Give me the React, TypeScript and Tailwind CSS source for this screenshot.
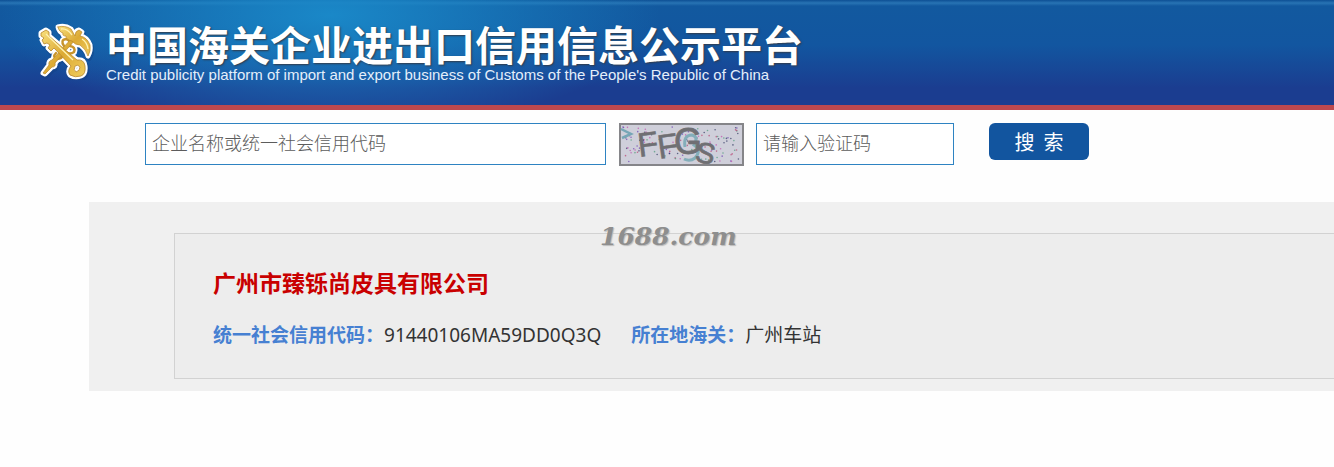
const colors = ["#6b3fb0", "#b8406f", "#4a9a78", "#2d3460", "#c04fae"];

const dots = Array.from({ length: 130 }, (_, i) => ({
	x: 4 + Math.abs(Math.sin(i * 12.9898) * 43758.5453) % 117,
	y: 4 + Math.abs(Math.sin(i * 78.233) * 12543.123) % 35,
	color: colors[i % colors.length],
}));

export default function App() {
	return (
		<div className="min-h-screen overflow-hidden bg-[#fefefe] font-['Noto_Sans','Noto_Sans_CJK_SC',sans-serif]">
			<Header />
			<main>
				<SearchForm />
				<Result />
			</main>
		</div>
	);
}

function Header() {
	return (
		<header className="flex h-[110px] items-start border-b-[5px] border-[#bd484e] bg-[radial-gradient(ellipse_330px_115px_at_330px_15px,#1a88c8_0%,#1a88c800_100%),linear-gradient(to_bottom,#0d4f94_0px,#2874b4_3px,#12599f_6px,#1256a0_45px,#1b3d90_88px,#1b3d90_100%)] pl-9 pt-5">
			<Emblem />
			<div className="ml-3 text-white">
				<h1 className="font-['Noto_Sans_CJK_SC',sans-serif] text-[41px] font-bold leading-[47px] whitespace-nowrap [text-shadow:1px_1px_2px_#333b48]">
					中国海关企业进出口信用信息公示平台
				</h1>
				<p className="font-['Liberation_Sans',sans-serif] text-[15px] leading-4 whitespace-nowrap text-[#e4effb]">
					Credit publicity platform of import and export business of Customs of the People's Republic of China
				</p>
			</div>
		</header>
	);
}

function Emblem() {
	return (
		<svg className="mt-0.5 h-[58px] w-[58px] shrink-0" viewBox="6 6 58 58" aria-hidden="true">
			<defs>
				<linearGradient id="gold" x1="0" y1="0" x2="1" y2="1">
					<stop offset="0" stopColor="#f8df7c" />
					<stop offset="0.5" stopColor="#dcaa34" />
					<stop offset="1" stopColor="#f0cc5c" />
				</linearGradient>
				<g id="staff" strokeLinejoin="round" strokeLinecap="round">
					<path d="M45 24 L25 47 Q26 51 22 51 L15 58 L13 57 L19 49 Q18 45 22 44 L42 22 Z" />
					<path d="M28 11 Q35 9 41 13 L45 20 Q45 15 49 14 L52 16 L50 20 Q57 21 60 29 Q61 35 58 40 Q56 33 50 29 Q45 29 42 25 Q36 24 36 20 Q32 20 33 17 Q29 16 28 11 Z" />
				</g>
				<g id="snakes" fill="none" strokeLinecap="round">
					<path d="M34 30 Q30 24 36 23 Q41 24 40 30 Q46 31 44 36 Q40 39 36 36 M26 37 Q22 41 27 43 Q32 43 33 39" />
				</g>
				<path
					id="key"
					d="M16 14 L19 16 L19 20 L47 44 Q54 43 55 50 Q56 58 51 60 Q45 62 40 59 Q37 55 41 50 L24 32 L21 35 L18 32 L20 29 L17 27 L14 28 L12 24 L14 22 L11 20 L11 17 Z M45 50 Q43 54 46 56 Q50 55 50 51 Q48 48 45 50 Z"
					fillRule="evenodd"
					strokeLinejoin="round"
				/>
			</defs>
			<g transform="translate(1 2)" stroke="#123f80" strokeWidth="6" opacity="0.4">
				<use href="#staff" />
				<use href="#key" />
			</g>
			<g fill="#fff" stroke="#fff" strokeWidth="5">
				<use href="#staff" />
				<use href="#snakes" strokeWidth="6" />
				<use href="#key" />
			</g>
			<use href="#snakes" stroke="#c8942a" strokeWidth="2.4" />
			<use href="#staff" fill="url(#gold)" stroke="#b9862a" strokeWidth="0.7" />
			<use href="#key" fill="url(#gold)" stroke="#b9862a" strokeWidth="0.8" />
			<path d="M16 18 L43 44 M31 13 Q37 12 42 19 M52 23 Q57 26 58 33" fill="none" stroke="#fff2b0" strokeWidth="1.3" />
		</svg>
	);
}

function SearchForm() {
	return (
		<form className="ml-[145px] flex items-start pt-[13px]" onSubmit={(e) => e.preventDefault()}>
			<input
				type="text"
				aria-label="企业名称或统一社会信用代码"
				placeholder="企业名称或统一社会信用代码"
				className="h-[42px] w-[461px] border border-[#2e83c2] bg-white px-1.5 pb-1 font-['Noto_Sans_CJK_SC',sans-serif] text-lg font-light text-gray-700 outline-none placeholder:text-[#5c5c5c]"
			/>
			<Captcha />
			<input
				type="text"
				aria-label="请输入验证码"
				placeholder="请输入验证码"
				className="ml-3 h-[42px] w-[198px] border border-[#2e83c2] bg-white px-1.5 pb-1 font-['Noto_Sans_CJK_SC',sans-serif] text-lg font-light text-gray-700 outline-none placeholder:text-[#5c5c5c]"
			/>
			<button
				type="submit"
				className="ml-[35px] h-[37px] w-[100px] rounded-md bg-[#12559f] font-['Noto_Sans_CJK_SC',sans-serif] text-xl leading-6 whitespace-pre text-white"
			>
				搜{"  "}索
			</button>
		</form>
	);
}

function Captcha() {
	return (
		<svg className="ml-[13px] h-[43px] w-[125px] shrink-0 overflow-visible" viewBox="0 0 125 43" role="img" aria-label="验证码">
			<rect x="1" y="1" width="123" height="41" fill="#cfcfda" stroke="#858589" strokeWidth="2" />
			{dots.map((dot, i) => (
				<circle key={i} cx={dot.x} cy={dot.y} r="0.8" fill={dot.color} opacity="0.7" />
			))}
			<path d="M2 6 L12 11 L3 15" fill="none" stroke="#76a6b6" strokeWidth="2.5" />
			<path d="M66 24 Q64 12 73 12 Q80 14 75 22 Q83 27 76 35 Q71 39 65 36" fill="none" stroke="#83aeba" strokeWidth="3" />
			<g fill="#6f6f73" stroke="#6f6f73" fontFamily="Liberation Sans" strokeLinejoin="round">
				<text x="20" y="34" fontSize="34" strokeWidth="0.5" transform="rotate(-7 20 34)">F</text>
				<text x="40" y="36" fontSize="34" strokeWidth="0.5" transform="rotate(-8 40 36)">F</text>
				<text x="55" y="31" fontSize="36" strokeWidth="0.8">G</text>
				<text x="75" y="38" fontSize="29" strokeWidth="0.8" transform="rotate(12 75 38)">S</text>
			</g>
		</svg>
	);
}

function Result() {
	return (
		<section className="relative ml-[89px] mt-9 bg-[#f0f0f0] pt-[31px] pb-3 pl-[85px]">
			<div className="border-y border-l border-[#d2d2d2] bg-[#ededed] pt-8 pb-7 pl-[38px]">
				<h2 className="font-['Noto_Sans_CJK_SC',sans-serif] text-[23px] font-bold leading-8 text-[#c90000]">
					广州市臻铄尚皮具有限公司
				</h2>
				<dl className="mt-[23px] flex gap-[30px] text-[19px] leading-[29px] whitespace-nowrap text-[#333]">
					<div className="flex">
						<dt className="font-bold text-[#4680d2]">统一社会信用代码：</dt>
						<dd>91440106MA59DD0Q3Q</dd>
					</div>
					<div className="flex">
						<dt className="font-bold text-[#4680d2]">所在地海关：</dt>
						<dd>广州车站</dd>
					</div>
				</dl>
			</div>
			<span className="absolute top-5 left-[511px] font-['DejaVu_Serif',serif] text-[25px] leading-[30px] font-bold italic text-[#8e8e8e] [text-shadow:1px_1px_1px_#bbb]">
				1688.com
			</span>
		</section>
	);
}
